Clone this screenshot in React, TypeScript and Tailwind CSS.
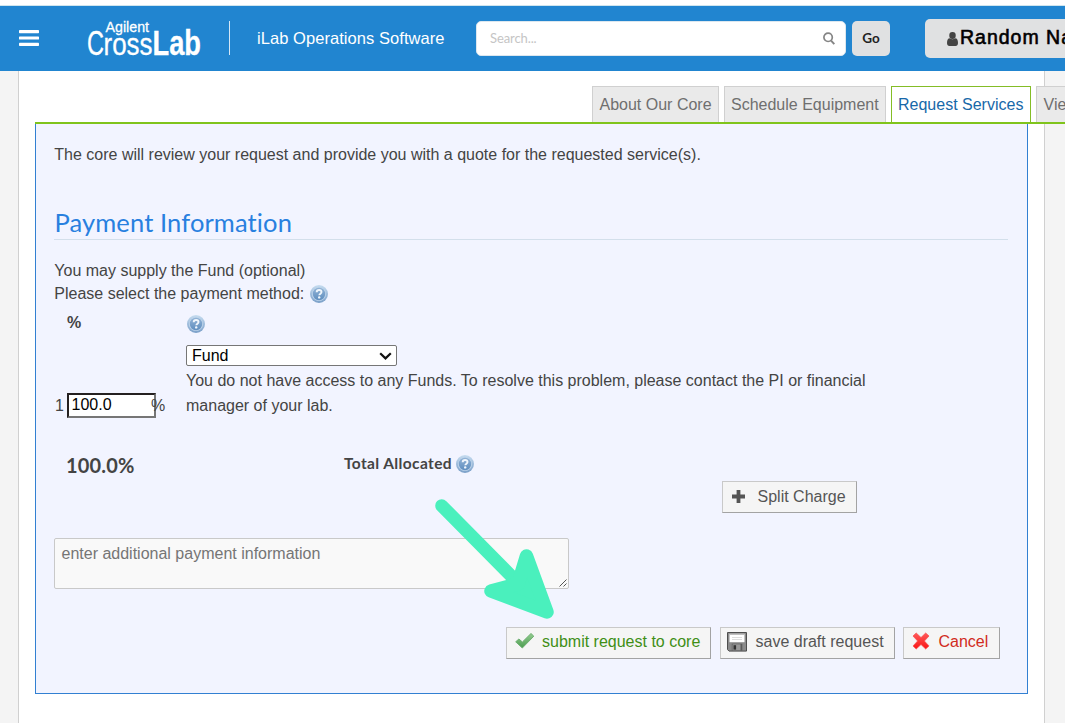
import React from "react";

function HelpIcon() {
  return (
    <svg width="18" height="18" viewBox="0 0 18 18" className="block shrink-0">
      <defs>
        <linearGradient id="helpRing" x1="0" y1="0" x2="0" y2="1">
          <stop offset="0" stopColor="#c6dcf0" />
          <stop offset="1" stopColor="#7a9fc8" />
        </linearGradient>
        <linearGradient id="helpFill" x1="0" y1="0" x2="0" y2="1">
          <stop offset="0" stopColor="#92b3d6" />
          <stop offset="1" stopColor="#5f8ebf" />
        </linearGradient>
      </defs>
      <circle cx="9" cy="9" r="9" fill="url(#helpRing)" />
      <circle cx="9" cy="9" r="7.1" fill="#bdd3ea" />
      <circle cx="9" cy="9" r="6.2" fill="url(#helpFill)" />
      <path d="M6.700 7.300C6.700 5.800 7.800 5 9.100 5c1.400 0 2.400.8 2.400 2 0 1.600-2.200 1.700-2.200 3.300" fill="none" stroke="#f0f6fc" strokeWidth="1.900" />
      <circle cx="9.200" cy="12.400" r="1.200" fill="#f0f6fc" />
    </svg>
  );
}

function Logo() {
  return (
    <svg width="116" height="42" viewBox="0 0 116 42" fill="#fff" stroke="#fff" strokeWidth=".3" fontFamily="Liberation Sans, sans-serif" className="block shrink-0">
      <text x="18.500" y="12.900" fontSize="15.500" textLength="43.500" lengthAdjust="spacingAndGlyphs">Agilent</text>
      <text x="0" y="35.500" fontSize="35" textLength="17" lengthAdjust="spacingAndGlyphs">C</text>
      <text x="16.500" y="35.500" fontSize="31" textLength="49" lengthAdjust="spacingAndGlyphs">ross</text>
      <text x="65.500" y="35.500" fontSize="35" fontWeight="700" textLength="48.500" lengthAdjust="spacingAndGlyphs">Lab</text>
    </svg>
  );
}

function CheckIcon() {
  return (
    <svg width="20" height="18" viewBox="0 0 20 18" className="block shrink-0">
      <defs>
        <linearGradient id="check" x1="0" y1="0" x2="0" y2="1">
          <stop offset="0" stopColor="#93cc90" />
          <stop offset="1" stopColor="#4b9c50" />
        </linearGradient>
      </defs>
      <path d="M.7 9.800 3.900 7l3.500 3L16 1.500 18.800 4.200 7.300 16Z" fill="url(#check)" stroke="#6fb072" strokeWidth="1" strokeLinejoin="round" />
    </svg>
  );
}

function DiskIcon() {
  return (
    <svg width="20" height="20" viewBox="0 0 20 20" className="block shrink-0">
      <path d="M.5.5h19v18.600H2L.5 17.600Z" fill="#8b8b8b" stroke="#4e4e4e" />
      <rect x="2.500" y="1.800" width="15" height="8.400" fill="#fff" />
      <path d="M2.500 2.400h15" stroke="#b8b8b8" />
      <path d="M5 5.500h10M5 7.500h10" stroke="#dedede" />
      <rect x="4.800" y="11.700" width="10.500" height="7" fill="#5b5b5b" />
      <rect x="5.500" y="12.300" width="8" height="6" fill="#999" />
      <rect x="6.500" y="13.200" width="2.600" height="4.400" fill="#333" />
    </svg>
  );
}

function CrossIcon() {
  return (
    <svg width="18" height="18" viewBox="0 0 18 18" className="block shrink-0">
      <defs>
        <linearGradient id="cross" x1="0" y1="0" x2="0" y2="1">
          <stop offset="0" stopColor="#ff5a5a" />
          <stop offset="1" stopColor="#f91616" />
        </linearGradient>
      </defs>
      <path d="m4.200 1 4.800 4.500L13.700 1 17 4l-4.600 5 4.600 4.900-3.300 3.100L9 12.500 4.200 17 1 14l4.600-5L1 4Z" fill="url(#cross)" stroke="#fb4a4a" strokeWidth=".7" strokeLinejoin="round" />
    </svg>
  );
}

const button = "flex h-8 shrink-0 items-center border border-t-[#c9c9c9] border-l-[#c9c9c9] border-r-[#a3a3a3] border-b-[#a3a3a3] bg-[#f5f5f5] text-[#555] whitespace-nowrap";
const tab = "h-9 shrink-0 border border-b-0 px-[6.5px] leading-[36px] whitespace-nowrap";

function Header() {
  return (
    <header className="flex h-[66px] w-[1065px] shrink-0 overflow-hidden border-t border-[#cfe5ee] bg-[#2185d0]">
      <svg width="20" height="16" viewBox="0 0 20 16" className="mt-6 ml-[19px] shrink-0" fill="#fff">
        <rect width="20" height="3.200" rx=".7" />
        <rect y="6.400" width="20" height="3.200" rx=".7" />
        <rect y="12.800" width="20" height="3.200" rx=".7" />
      </svg>
      <div className="mt-[13px] ml-12"><Logo /></div>
      <div className="mt-[15px] ml-[25.5px] h-[34px] w-[1.5px] shrink-0 bg-[#d4e7f6]" />
      <div className="mt-[21px] ml-[27px] w-[219px] shrink-0">
        <svg width="190" height="24" className="block" fill="#fff">
          <text x="0" y="16.500" fontSize="16.500" textLength="187.500" lengthAdjust="spacing">iLab Operations Software</text>
        </svg>
      </div>
      <div className="mt-[15px] flex h-[35px] w-[370px] shrink-0 items-center justify-between rounded-[5px] border border-[#dce7ef] bg-white pr-[10px] pl-[13px] font-[Lato,sans-serif] text-[13px] text-[#c5c5c5]">
        <span className="tracking-[-0.1px]">Search...</span>
        <svg width="12" height="13" viewBox="0 0 12 13" fill="none" stroke="#858585" strokeWidth="1.700">
          <circle cx="5.100" cy="5.300" r="4.200" />
          <path d="m8.100 8.600 3.200 3.500" strokeWidth="2" />
        </svg>
      </div>
      <div className="mt-[15px] ml-[6px] flex h-[35px] w-[38px] shrink-0 items-center justify-center rounded-[5px] bg-[#e0e1e2] font-[Lato,sans-serif] text-[13.5px] font-bold text-[#222]">Go</div>
      <div className="mt-[13px] ml-[35px] flex h-[39px] w-[180px] shrink-0 items-center rounded-[5px] bg-[#e0e1e2] pl-[22px]">
        <svg width="11" height="14" viewBox="0 0 11 14" fill="#444" className="mr-[2px] shrink-0">
          <rect x="2.300" y="0" width="6.400" height="7" rx="3" />
          <path d="M0 11c0-3 1-4.700 2.700-4.700 1.800 1.200 3.800 1.200 5.600 0C10 6.300 11 8 11 11c0 2-1 3-2.400 3H2.400C1 14 0 13 0 11Z" />
        </svg>
        <span className="-mt-[2px] text-[19.5px] tracking-[1px] whitespace-nowrap text-black [-webkit-text-stroke:0.6px_black]">Random Name</span>
      </div>
    </header>
  );
}

export default function App() {
  return (
    <div className="relative flex h-[723px] w-[1066px] flex-col overflow-hidden bg-white pt-[5px] font-['Liberation_Sans',Arial,sans-serif] text-[16px] text-[#444]">
      <Header />
      <div className="flex h-[652px] w-[1065px] overflow-hidden bg-[#f4f4f4] pl-[18px]">
        <main className="flex w-[1027px] shrink-0 flex-col border-x border-[#d0d0d0] bg-white pt-[15px] pl-4">
          <nav className="-mr-5 flex h-9 w-[1030px] shrink-0 gap-[5px] overflow-hidden bg-white pl-[557px] text-[#6f6f6f]">
            <div className={tab + " w-[127px] border-[#d0d0d0] bg-[#eaeaea]"}>About Our Core</div>
            <div className={tab + " w-[162px] border-[#d0d0d0] bg-[#eaeaea]"}><span className="-ml-[0.5px]">Schedule Equipment</span></div>
            <div className={tab + " w-[140px] border-[#84bd26] bg-white text-[#1768a9]"}><span className="-ml-[0.5px]">Request Services</span></div>
            <div className={tab + " w-[145px] border-[#d0d0d0] bg-[#eaeaea]"}>View My Requests</div>
          </nav>
          <div className="h-[2px] w-[1030px] shrink-0 bg-[#80c41c]" />
          <section className="h-[570px] w-[993px] shrink-0 border border-t-0 border-[#3280d2] bg-[#f2f4ff] px-[18px] pt-[19px]">
            <p className="h-6 pl-[0.3px] leading-6">The core will review your request and provide you with a quote for the requested service(s).</p>
            <h2 className="mt-[33px] h-10 w-[954px] border-b border-[#d3dfeb] pl-[0.5px] font-[Lato,sans-serif] text-[25.5px] leading-[44px] tracking-[0.12px] text-[#2880df] [font-variant-ligatures:none]">Payment Information</h2>
            <p className="mt-[19px] h-[23px] pl-[0.3px] leading-[23px]">You may supply the Fund (optional)</p>
            <div className="flex h-[23px] items-center pl-[0.3px] leading-[23px]">Please select the payment method:<span className="ml-[6px]"><HelpIcon /></span></div>
            <div className="mt-[7px] flex h-6 items-center">
              <span className="-mt-[2px] w-[133px] pl-[13px] text-[16px] leading-5 font-bold">%</span>
              <HelpIcon />
            </div>
            <div className="mt-[9px] flex h-[75px]">
              <div className="flex w-[132px] shrink-0 items-center pt-[46px]">
                <span className="w-[13px] pt-px pl-px">1</span>
                <div className="-mt-px h-[25px] w-[89px] shrink-0 border-2 border-t-[#242020] border-l-[#242020] border-r-[#767676] border-b-[#767676] bg-white pl-[2.5px] leading-[20px] text-black">100.0</div>
                <span className="-ml-[5px] leading-5">%</span>
              </div>
              <div className="w-[720px]">
                <div className="flex h-[21px] w-[211px] items-center justify-between rounded-[2px] border border-[#767676] bg-white pr-1 pl-[5px] text-black">
                  Fund
                  <svg width="13" height="8" viewBox="0 0 13 8" fill="none" stroke="#111" strokeWidth="2.200"><path d="m1.200 1.200 5.300 5.200 5.300-5.200" /></svg>
                </div>
                <p className="mt-[2px] leading-[25px]">You do not have access to any Funds. To resolve this problem, please contact the PI or financial<br />manager of your lab.</p>
              </div>
            </div>
            <div className="mt-[29px] flex h-[30px] items-center pl-3 font-[Lato,sans-serif] font-bold">
              <span className="w-[278px] pt-[2px] text-[20px] tracking-[0.15px]">100.0%</span>
              <span className="mr-[3.5px] w-[108.500px] text-[15.5px] tracking-[0.38px] whitespace-nowrap">Total Allocated</span>
              <HelpIcon />
            </div>
            <div className="mt-[2px] flex h-8 pl-[668px]">
              <div className={button + " w-[135px] pl-[9px]"}>
                <svg width="13" height="13" viewBox="0 0 13 13" className="mr-3 -mt-[2px]"><path d="M4.600 0h3.800v4.600H13v3.800H8.400V13H4.600V8.400H0V4.600h4.600Z" fill="#555" /></svg>
                <span className="-mt-px ml-[0.500px]">Split Charge</span>
              </div>
            </div>
            <div className="mt-[25px] flex h-[51px] w-[515px] justify-between rounded-[2px] border border-[#c9c9c9] bg-[#f9f9f9] pl-[6.5px] text-[#757575]">
              <span className="pt-[5px] leading-[19px]">enter additional payment information</span>
              <svg width="8" height="8" viewBox="0 0 8 8" className="mr-px mb-px self-end" stroke="#555" fill="none"><path d="M.5 7.500 7.500.5M4.500 7.500l3-3" /></svg>
            </div>
            <div className="mt-[38px] flex h-8 pl-[452px]">
              <div className={button + " w-[205px] pl-2"}>
                <span className="-mt-[4px]"><CheckIcon /></span>
                <span className="-mt-[3px] ml-[7px] text-[#3f8f16]">submit request to core</span>
              </div>
              <div className={button + " ml-[9px] w-[175px] pl-[6px]"}>
                <span className="-mt-[3px]"><DiskIcon /></span>
                <span className="-mt-[3px] ml-[8.5px]">save draft request</span>
              </div>
              <div className={button + " ml-2 w-[97px] pl-2"}>
                <span className="-mt-[5px]"><CrossIcon /></span>
                <span className="-mt-[3px] ml-[8.500px] text-[#d12b20]">Cancel</span>
              </div>
            </div>
          </section>
        </main>
      </div>
      <svg width="121" height="121" viewBox="0 0 121 121" className="pointer-events-none absolute top-[499px] left-[435px]">
        <g transform="translate(-435 -499)" fill="#4af0bd" stroke="#4af0bd" strokeLinecap="round" strokeLinejoin="round">
          <path d="M441.700 505.700 522 587" strokeWidth="13" />
          <path d="M526.500 556 547 612 491 591 518 584Z" strokeWidth="13.500" />
        </g>
      </svg>
    </div>
  );
}
